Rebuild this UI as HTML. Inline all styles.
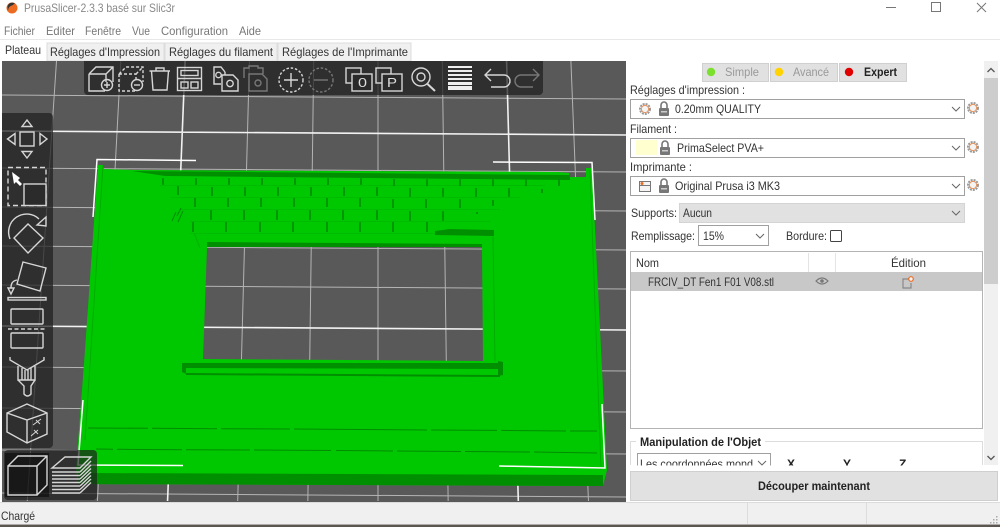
<!DOCTYPE html>
<html><head><meta charset="utf-8"><title>PrusaSlicer</title>
<style>
html,body{margin:0;padding:0;background:#fff;width:1000px;height:527px;overflow:hidden}
svg{display:block}
body>svg{filter:blur(.35px)}
text{font-family:"Liberation Sans",sans-serif;font-size:12px;fill:#333}
.m{fill:#777}
.b{font-weight:bold;fill:#222}
.i{fill:none;stroke:#d6d6d6;stroke-width:1.4}
.d{fill:none;stroke:#777;stroke-width:1.4}
</style></head><body>
<svg width="1000" height="527" viewBox="0 0 1000 527" xmlns="http://www.w3.org/2000/svg">
<defs>
<g id="gear"><circle r="5" fill="none" stroke="#999" stroke-width="2" stroke-dasharray="2 1"/><circle r="3.6" fill="#f4f4f4" stroke="#e8935a" stroke-width="1"/></g>
<g id="lock"><rect x="-5" y="-1" width="10" height="8" rx="1" fill="#777"/><path d="M-3-1V-4a3 3 0 0 1 6 0V-1" fill="none" stroke="#777" stroke-width="1.6"/><rect x="-3" y="2" width="6" height="1.5" fill="#ccc"/></g>
<path id="chev" d="M-4-2L0 2L4-2" fill="none" stroke="#666" stroke-width="1"/>
</defs>

<!-- title bar -->
<rect width="1000" height="40" fill="#fff"/>
<circle cx="12" cy="8" r="5.5" fill="#ed6b21"/>
<path d="M8 12C8 6 11 6 13 5C14 4 15 3 15 3.5C12 1.5 8 3 7.5 7Z" fill="#333"/>
<text x="24" y="12" textLength="151" lengthAdjust="spacingAndGlyphs" fill="#888" style="fill:#888">PrusaSlicer-2.3.3 basé sur Slic3r</text>
<path d="M886 7.500H896" stroke="#777"/>
<rect x="931.500" y="2.500" width="9" height="9" fill="none" stroke="#777"/>
<path d="M977 3L986 12M986 3L977 12" stroke="#777"/>
<text class="m" x="4" y="35" textLength="31" lengthAdjust="spacingAndGlyphs">Fichier</text>
<text class="m" x="46" y="35" textLength="29" lengthAdjust="spacingAndGlyphs">Editer</text>
<text class="m" x="85" y="35" textLength="36" lengthAdjust="spacingAndGlyphs">Fenêtre</text>
<text class="m" x="132" y="35" textLength="18" lengthAdjust="spacingAndGlyphs">Vue</text>
<text class="m" x="161" y="35" textLength="67" lengthAdjust="spacingAndGlyphs">Configuration</text>
<text class="m" x="239" y="35" textLength="22" lengthAdjust="spacingAndGlyphs">Aide</text>
<rect y="39" width="1000" height="1" fill="#e8e8e8"/>

<!-- tabs -->
<rect x="47" y="43" width="117" height="18" fill="#f0f0f0" stroke="#dcdcdc"/>
<rect x="165" y="43" width="112" height="18" fill="#f0f0f0" stroke="#dcdcdc"/>
<rect x="278" y="43" width="133" height="18" fill="#f0f0f0" stroke="#dcdcdc"/>
<text x="5" y="54" textLength="36" lengthAdjust="spacingAndGlyphs">Plateau</text>
<text x="50" y="56" textLength="110" lengthAdjust="spacingAndGlyphs">Réglages d'Impression</text>
<text x="169" y="56" textLength="104" lengthAdjust="spacingAndGlyphs">Réglages du filament</text>
<text x="282" y="56" textLength="126" lengthAdjust="spacingAndGlyphs">Réglages de l'Imprimante</text>

<!-- canvas -->
<svg x="2" y="61" width="624" height="441" viewBox="2 61 624 441">
<rect x="2" y="61" width="624" height="441" fill="#595959"/>
<g stroke="#b4b4b4" stroke-width="1" fill="none">
<path d="M56.500 61L27.250 501M120.800 61L97.400 501M249.400 61L237.700 501M313.700 61L307.850 501M378 61V501M442.300 61L448.150 501M570.900 61L588.450 501"/>
<path d="M2 95L626 99M2 168L626 172M2 207L626 211M2 246L626 250M2 285L626 289M2 367L626 371M2 408L626 412M2 450L626 454M2 493L626 497"/>
</g>
<g stroke="#f2f2f2" stroke-width="1.600" fill="none">
<path d="M185.100 61L167.550 501M506.600 61L518.300 501M2 131L626 135M2 326L626 330"/>
</g>

<!-- object -->
<path fill-rule="evenodd" fill="#00c800" d="M98 165L103 165L104 169L132 170L557 172L569 173L570 177L586 177L586 168L592 168L607 470L603 486L78 484L76 470L85 350Z M207 247L482 247L483 361L203 359Z"/>
<g fill="#008f00">
<path d="M132 171L570 175V180L165 176Z"/>
<path d="M207 242L482 244V247H207Z"/>
<path d="M435 231L450 229L494 230V236L435 235Z"/>
<path d="M182 363L503 363V369L186 368V374L182 372Z"/>
<path d="M186 373L500 375V377L186 375Z"/>
<path d="M78 473L603 475V486L78 484Z"/>
<path d="M498 361L503 362V375L498 376Z"/>
</g>
<g stroke="#00ae00" fill="none" stroke-width="1">
<path d="M103 165L85 440"/>
<path d="M590 170L601 470"/>
<path d="M194 233L200 248M493 237L495 361"/>
</g>
<path stroke="#00bc00" fill="none" d="M160 185.500H545M170 197.500H520M180 209.500H500M190 221.500H490M190 233.500H435"/>
<g stroke="#008c00" fill="none" stroke-width="1.600">
<path d="M163 178v7M196 178v7M229 178v7M262 178v7M295 178v7M328 178v7M361 178v7M394 179v7M427 179v7M460 179v7M493 179v7M526 179v7M559 179v7"/>
<path d="M178 186v9M212 187v9M245 187v9M278 187v9M311 187v9M344 187v9M377 187v9M410 188v9M443 188v9M476 188v9M509 188v9M542 189v4"/>
<path d="M195 198v9M228 198v9M261 198v9M294 198v9M327 198v9M360 198v9M393 199v9M426 199v9M460 199v9M493 200v6"/>
<path d="M211 210v10M244 210v10M277 210v10M310 210v10M343 210v10M377 210v10M410 211v10M443 211v10M477 212v2"/>
<path d="M193 222v10M226 222v10M260 222v10M293 222v10M327 222v10M360 222v10M393 222v10M427 222v10"/>
</g>
<g stroke="#008c00" fill="none" stroke-width="1">
<path d="M178 222L183 211M177 216L181 208M172 221L176 212"/>
<path d="M88 428L148 428.300M152 428.300L217 428.700M221 428.700L290 429M294 429L361 429.500M361 429.500L427 430M431 430L497 430.400M501 430.400L566 431M570 431L597 431"/>
<path d="M96 449L113 449.300M117 449.300L182 449.700M186 449.700L250 450M254 450L331 450.500M336 450.500L393 451M397 451L461 451.500M465 451.500L530 452M534 452L597 453"/>
</g>

<!-- selection corners -->
<g stroke="#fff" stroke-width="1.500" fill="none">
<path d="M93 217L97 159.500L196 160.500"/>
<path d="M493 162L592 162.500L595 220"/>
<path d="M83 400L78 465L183 465.500"/>
<path d="M602 404L605 468L499 466"/>
</g>

<!-- toolbars -->
<rect x="84" y="55" width="459" height="40" rx="4" fill="#1e1e1e" fill-opacity=".72"/>
<rect x="-4" y="113" width="57" height="335" rx="4" fill="#1e1e1e" fill-opacity=".72"/>
<rect x="4" y="450" width="93" height="50" rx="4" fill="#1e1e1e" fill-opacity=".68"/>
<rect x="5" y="453" width="44" height="44" fill="#000" fill-opacity=".5"/>

<!-- top icons -->
<g class="i">
<path d="M89 74V91H105M89 74L96 67H113V82M89 74H106V82M106 74L113 67"/>
<circle cx="107" cy="85" r="5.500"/><path d="M104 85H110M107 82V88"/>
<g stroke-dasharray="3 2"><path d="M119 74V91H135M119 74L126 67H143V82M119 74H136V82M136 74L143 67"/></g>
<circle cx="137" cy="85" r="5.500"/><path d="M134 85H140"/>
<path d="M149.500 71H170M156 71V68H164V71M151.500 71L153 90H167L168.500 71"/>
<rect x="177.500" y="67.500" width="24" height="23"/><path d="M177.500 78.500H201.500"/><rect x="181" y="70.500" width="17" height="5"/><rect x="181" y="82" width="7" height="6"/><rect x="191" y="82" width="7" height="6"/>
<path d="M225 72L221 67H214V84H221"/><circle cx="218.500" cy="75" r="2.700"/>
<path d="M225 72V75M222 75H233L238 80V91H222Z"/><circle cx="230" cy="83.500" r="3.200"/>
<circle cx="291" cy="80" r="12" stroke-dasharray="2.500 1.800"/><path d="M284 80H298M291 73V87"/>
<rect x="346" y="68" width="15" height="15"/><rect x="352" y="74" width="20" height="17" fill="#2a2a2a"/>
<rect x="376" y="68" width="15" height="15"/><rect x="382" y="74" width="20" height="17" fill="#2a2a2a"/>
<circle cx="421" cy="77" r="9"/><circle cx="421" cy="77" r="4"/><path d="M427.500 84L435 91" stroke-width="2"/>
<path d="M486 75H504A6 6 0 0 1 504 87H491M491 69L485 75L491 81"/>
</g>
<text x="358" y="87" textLength="9" lengthAdjust="spacingAndGlyphs" style="fill:#ddd;font-size:13px">0</text>
<text x="387" y="87" textLength="10" lengthAdjust="spacingAndGlyphs" style="fill:#ddd;font-size:13px">P</text>
<g fill="#eee"><rect x="448" y="66" width="24" height="2"/><rect x="448" y="70" width="24" height="2"/><rect x="448" y="74" width="24" height="2"/><rect x="448" y="78" width="24" height="2"/><rect x="448" y="82" width="24" height="3"/><rect x="448" y="86" width="24" height="4"/></g>
<g class="d">
<path d="M244 78V68H249V66H258V68H263V74"/>
<path d="M249 74H262L267 79V91H249Z"/><circle cx="258" cy="83" r="3"/>
<circle cx="321" cy="80" r="12" stroke-dasharray="2.500 1.800"/><path d="M314 80H328"/>
<path d="M538 75H521A6 6 0 0 0 521 87H533M533 69L539 75L533 81"/>
</g>

<!-- left icons -->
<g class="i">
<rect x="20" y="132" width="14" height="14"/>
<path d="M27 120L22 126.500H32Z M22 151.500H32L27 158Z M7.500 139L15 133.500V144.500Z M40 133.500L47 139L40 144.500Z"/>
<rect x="8" y="167.500" width="38" height="38" stroke-dasharray="5 3"/>
<rect x="24" y="184" width="22" height="21.500" fill="#2b2b2b"/>
<path d="M28 224L43 238L28 253L14 238Z"/>
<path d="M10 239A18 18 0 0 1 39 219"/><path d="M37 225L46 217V226Z"/>
<path d="M23 262L46 268L40 291L17 284Z"/>
<rect x="8" y="297.500" width="38" height="2.500"/>
<path d="M17 280C12 281 11 284 11 288M8 288H14L11 294Z"/>
<rect x="11" y="309" width="32" height="15" rx="1"/><path d="M8 329H46" stroke-dasharray="4 2.500"/><rect x="11" y="333" width="32" height="15" rx="1"/>
<path d="M10 357V360L27 370L44 360V357"/>
<path d="M18 366V380H35V366M22 368V380M25 370V380M28 370V380M31 368V380"/>
<path d="M18 380L24 386V394Q27.500 398 31 394V386L35 380"/>
<path d="M7 413L27 404L47 413V434L27 443L7 432Z M7 413L27 420L47 413M27 420V443"/>
<path d="M33 425L41 419M36 420L40 424M31 436L38 430M34 430L38 434" stroke-width="1"/>
<path d="M8 466H37V495H8Z M8 466L18 456H47V485L37 495M37 466L47 456"/>
<path d="M52 468L65 457H91L80 468Z"/>
<path d="M52 472H80M52 475.500H80M52 479H80M52 482.500H80M52 486H80M52 489.500H80M52 493H80M80 472L91 461M80 475.500L91 465M80 479L91 468.500M80 482.500L91 472M80 486L91 475.500M80 489.500L91 479M80 493L91 482.500"/>
</g>
<path d="M12 172L20 178L18 180L22 184L20 186L16 182L14 184Z" fill="#fff"/>
</svg>

<!-- right panel -->
<rect x="984" y="61" width="14" height="404" fill="#f0f0f0"/>
<rect x="984" y="78" width="14" height="206" fill="#cdcdcd"/>
<path d="M987.500 72L991 68.500L994.500 72M987.500 456L991 459.500L994.500 456" fill="none" stroke="#555" stroke-width="1.300"/>

<rect x="702.500" y="63.500" width="66" height="18" fill="#e1e1e1" stroke="#d0d0d0"/>
<rect x="770.500" y="63.500" width="67" height="18" fill="#e1e1e1" stroke="#d0d0d0"/>
<rect x="839.500" y="63.500" width="67" height="18" fill="#e1e1e1" stroke="#d0d0d0"/>
<circle cx="711" cy="72" r="4.200" fill="#7ce02e"/>
<circle cx="779" cy="72" r="4.200" fill="#ffd200"/>
<circle cx="849" cy="72" r="4.200" fill="#e00000"/>
<text x="725" y="76" textLength="34" lengthAdjust="spacingAndGlyphs" style="fill:#999">Simple</text>
<text x="793" y="76" textLength="36" lengthAdjust="spacingAndGlyphs" style="fill:#999">Avancé</text>
<text class="b" x="864" y="76" textLength="33" lengthAdjust="spacingAndGlyphs">Expert</text>

<text x="630" y="94" textLength="115" lengthAdjust="spacingAndGlyphs">Réglages d'impression :</text>
<rect x="630.500" y="99.500" width="334" height="19" fill="#fff" stroke="#a0a0a0"/>
<use href="#gear" x="645" y="109"/><use href="#lock" x="664" y="109"/>
<text x="675" y="113" textLength="86" lengthAdjust="spacingAndGlyphs">0.20mm QUALITY</text>
<use href="#chev" x="956" y="109"/><use href="#gear" x="973" y="108"/>

<text x="630" y="133" textLength="47" lengthAdjust="spacingAndGlyphs">Filament :</text>
<rect x="630.500" y="138.500" width="334" height="19" fill="#fff" stroke="#a0a0a0"/>
<rect x="636" y="140" width="21" height="15" fill="#ffffd0"/><use href="#lock" x="665" y="148"/>
<text x="677" y="152" textLength="87" lengthAdjust="spacingAndGlyphs">PrimaSelect PVA+</text>
<use href="#chev" x="956" y="148"/><use href="#gear" x="973" y="147"/>

<text x="630" y="171" textLength="62" lengthAdjust="spacingAndGlyphs">Imprimante :</text>
<rect x="630.500" y="176.500" width="334" height="19" fill="#fff" stroke="#a0a0a0"/>
<rect x="639.500" y="181.500" width="11" height="10" fill="#f4f4f4" stroke="#777"/><rect x="640" y="185" width="10" height="1" fill="#777"/><circle cx="642" cy="183.500" r="1.500" fill="#ed6b21"/>
<use href="#lock" x="664" y="186"/>
<text x="675" y="190" textLength="105" lengthAdjust="spacingAndGlyphs">Original Prusa i3 MK3</text>
<use href="#chev" x="956" y="186"/><use href="#gear" x="973" y="185"/>

<text x="631" y="217" textLength="46" lengthAdjust="spacingAndGlyphs">Supports:</text>
<rect x="679.500" y="203.500" width="285" height="19" fill="#e1e1e1" stroke="#d4d4d4"/>
<text x="683" y="217" textLength="29" lengthAdjust="spacingAndGlyphs">Aucun</text>
<use href="#chev" x="956" y="213"/>

<text x="631" y="240" textLength="64" lengthAdjust="spacingAndGlyphs">Remplissage:</text>
<rect x="698.500" y="225.500" width="70" height="20" fill="#fff" stroke="#a0a0a0"/>
<text x="703" y="240" textLength="21" lengthAdjust="spacingAndGlyphs">15%</text>
<use href="#chev" x="760" y="236"/>
<text x="786" y="240" textLength="41" lengthAdjust="spacingAndGlyphs">Bordure:</text>
<rect x="830.500" y="230.500" width="11" height="11" rx="1" fill="#fff" stroke="#444"/>

<rect x="630.500" y="251.500" width="352" height="177" fill="#fff" stroke="#b4b4b4"/>
<path d="M808.500 253V272M835.500 253V272" stroke="#e4e4e4"/>
<text x="636" y="267" textLength="23" lengthAdjust="spacingAndGlyphs">Nom</text>
<text x="891" y="267" textLength="35" lengthAdjust="spacingAndGlyphs">Édition</text>
<rect x="631" y="272" width="351" height="19" fill="#c8c8c8"/>
<text x="648" y="286" textLength="126" lengthAdjust="spacingAndGlyphs">FRCIV_DT Fen1 F01 V08.stl</text>
<path d="M816 281Q822 275 828 281Q822 287 816 281Z" fill="none" stroke="#777" stroke-width="1.200"/><circle cx="822" cy="281" r="1.800" fill="#777"/>
<path d="M909 279H903V288H911V283" fill="none" stroke="#888" stroke-width="1.200"/><circle cx="911" cy="279" r="2.300" fill="#f4f4f4" stroke="#ed6b21" stroke-width="1.200"/>

<path d="M630.500 465V441.500H636M765 441.500H982.500V465" fill="none" stroke="#dcdcdc"/>
<text class="b" x="640" y="446" textLength="121" lengthAdjust="spacingAndGlyphs">Manipulation de l'Objet</text>
<svg x="630" y="450" width="354" height="15.500" viewBox="630 450 354 15.500">
<rect x="637.500" y="453.500" width="133" height="20" fill="#fff" stroke="#a0a0a0"/>
<text x="640" y="468" textLength="113" lengthAdjust="spacingAndGlyphs">Les coordonnées mond</text>
<use href="#chev" x="762" y="463"/>
<text class="b" x="787" y="468">X</text><text class="b" x="843" y="468">Y</text><text class="b" x="899" y="468">Z</text>
</svg>

<rect x="630.500" y="471.500" width="367" height="29" fill="#e1e1e1" stroke="#cfcfcf"/>
<text class="b" x="758" y="490" textLength="112" lengthAdjust="spacingAndGlyphs">Découper maintenant</text>

<!-- status bar -->
<rect y="502" width="1000" height="22" fill="#f0f0f0"/>
<rect y="502" width="1000" height="1" fill="#dcdcdc"/>
<path d="M747.500 503V524M866.500 503V524" stroke="#dcdcdc"/>
<text x="1" y="520" textLength="34" lengthAdjust="spacingAndGlyphs">Chargé</text>
<g fill="#aaa"><rect x="996" y="516" width="1.500" height="1.500"/><rect x="993" y="519" width="1.500" height="1.500"/><rect x="996" y="519" width="1.500" height="1.500"/><rect x="990" y="522" width="1.500" height="1.500"/><rect x="993" y="522" width="1.500" height="1.500"/><rect x="996" y="522" width="1.500" height="1.500"/></g>
<rect y="524.500" width="1000" height="2.500" fill="#5b5650"/>
</svg>
</body></html>
